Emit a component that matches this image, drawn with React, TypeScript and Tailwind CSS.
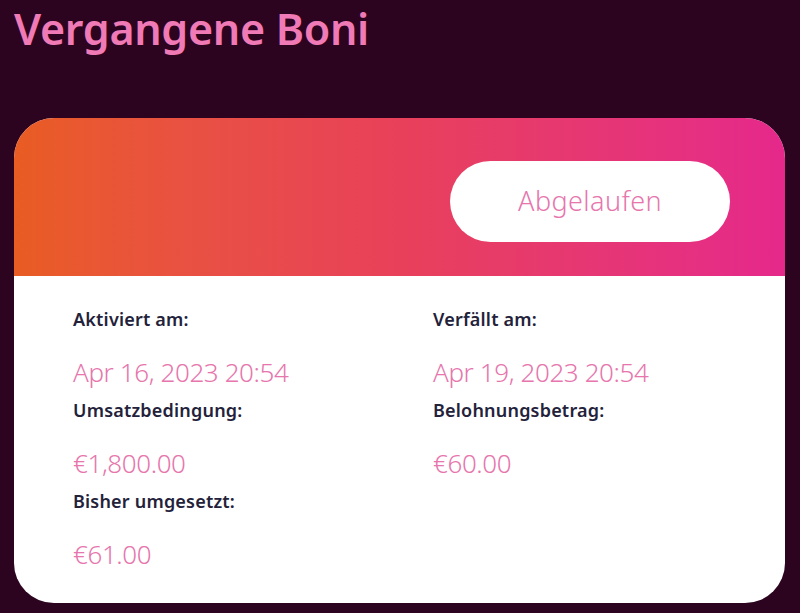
import React from "react";

const font = { fontFamily: '"Noto Sans", "Open Sans", sans-serif' };

function Field({ label, value }: { label: string; value: string }) {
  return (
    <div className="flex flex-col">
      <div className="h-[24px] leading-[24px] text-[18px] font-semibold text-[#23223a] tracking-[0.2px]">{label}</div>
      <div className="mt-[25px] h-[32px] leading-[32px] text-[26px] font-light text-[#e676ad] tracking-[-0.4px]">{value}</div>
    </div>
  );
}

export default function App() {
  return (
    <div className="w-[800px] h-[613px] bg-[#2c0420] overflow-hidden" style={font}>
      <h1 className="pl-[14px] pt-[2px] h-[118px] text-[43px] leading-[54px] font-semibold text-[#f07ab6] tracking-[-0.3px]">
        Vergangene Boni
      </h1>
      <div className="mx-[14px] w-[771px] h-[485px] rounded-[40px] overflow-hidden bg-white flex flex-col">
        <div className="h-[158px] bg-gradient-to-r from-[#e95c22] via-[#e8405a] to-[#e5288b] flex justify-end items-start pt-[43px] pr-[55px]">
          <div className="w-[280px] h-[81px] rounded-full bg-white flex items-center justify-center text-[27px] font-light text-[#e676ad] tracking-[0.4px]">
            Abgelaufen
          </div>
        </div>
        <div className="grid grid-cols-[360px_1fr] pl-[59px] pt-[31px]">
          <div className="flex flex-col gap-[10px]">
            <Field label="Aktiviert am:" value="Apr 16, 2023 20:54" />
            <Field label="Umsatzbedingung:" value="€1,800.00" />
            <Field label="Bisher umgesetzt:" value="€61.00" />
          </div>
          <div className="flex flex-col gap-[10px]">
            <Field label="Verfällt am:" value="Apr 19, 2023 20:54" />
            <Field label="Belohnungsbetrag:" value="€60.00" />
          </div>
        </div>
      </div>
    </div>
  );
}
